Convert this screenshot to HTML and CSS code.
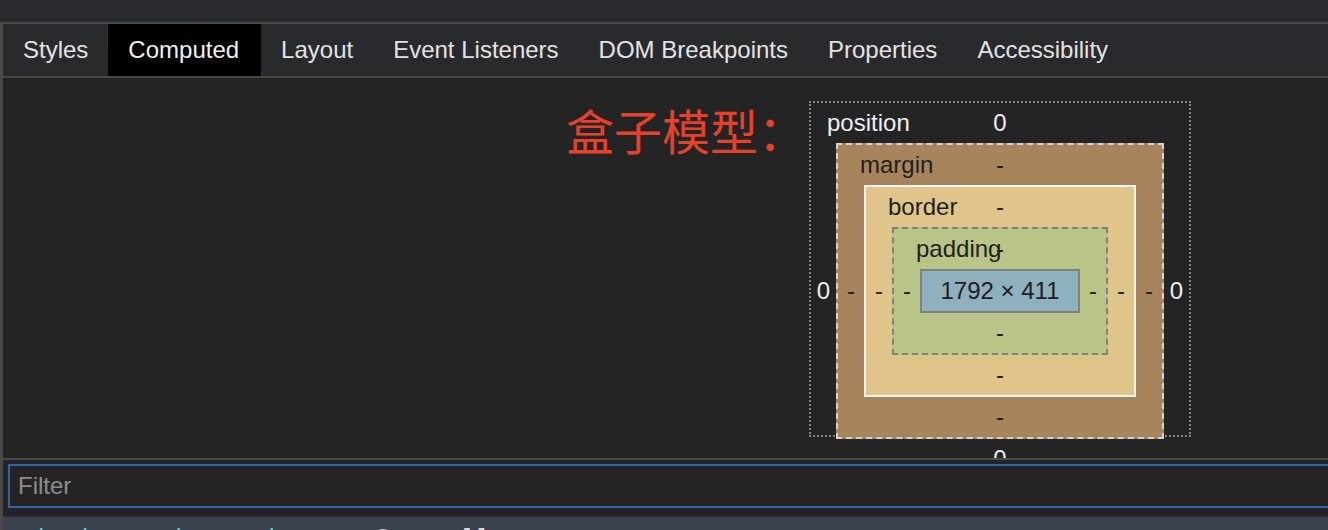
FILE: index.html
```html
<!DOCTYPE html>
<html lang="zh-CN">
<head>
<meta charset="utf-8">
<title>Computed</title>
<link rel="stylesheet" href="styles.css">
</head>
<body>
<div class="topstrip"></div>
<div class="shell">
  <div class="panel">
    <nav class="tabs">
      <div class="tab">Styles</div>
      <div class="tab active">Computed</div>
      <div class="tab">Layout</div>
      <div class="tab">Event Listeners</div>
      <div class="tab">DOM Breakpoints</div>
      <div class="tab">Properties</div>
      <div class="tab">Accessibility</div>
    </nav>
    <section class="content">
      <div class="note">盒子模型：</div>
      <div class="bm position">
        <div class="edge"><span class="lbl">position</span><span class="val">0</span><span></span></div>
        <div class="mid">
          <span class="side">0</span>
          <div class="bm margin">
            <div class="edge"><span class="lbl">margin</span><span class="val">-</span><span></span></div>
            <div class="mid">
              <span class="side">-</span>
              <div class="bm border">
                <div class="edge"><span class="lbl">border</span><span class="val">-</span><span></span></div>
                <div class="mid">
                  <span class="side">-</span>
                  <div class="bm padding">
                    <div class="edge"><span class="lbl">padding</span><span class="val">-</span><span></span></div>
                    <div class="mid">
                      <span class="side">-</span>
                      <div class="bm contentbox">1792 × 411</div>
                      <span class="side">-</span>
                    </div>
                    <div class="edge bottom"><span></span><span class="val">-</span><span></span></div>
                  </div>
                  <span class="side">-</span>
                </div>
                <div class="edge bottom"><span></span><span class="val">-</span><span></span></div>
              </div>
              <span class="side">-</span>
            </div>
            <div class="edge bottom"><span></span><span class="val">-</span><span></span></div>
          </div>
          <span class="side">0</span>
        </div>
        <div class="edge bottom"><span></span><span class="val">0</span><span></span></div>
      </div>
    </section>
    <div class="filterbar">
      <div class="filter">Filter</div>
    </div>
    <div class="proprow">
      <span class="tri">▶</span>
      <span class="pname">background-attachment</span><span class="colon">:</span>
      <span class="info"></span>
      <span class="pval">scroll</span>
    </div>
  </div>
</div>
</body>
</html>
```
FILE: styles.css
```css
html, body {
  margin: 0;
  padding: 0;
  background: #242424;
  overflow: hidden;
  height: 530px;
}
body {
  font-family: "Liberation Sans", Arial, sans-serif;
  color: #e8e8e8;
}
.topstrip {
  height: 22px;
  background: #292a2d;
  border-bottom: 2px solid #474747;
}
.shell {
  border-left: 3px solid #4a4a4a;
}
.panel {
  display: flex;
  flex-direction: column;
}
.tabs {
  display: flex;
  height: 52px;
  background: #292a2d;
  border-bottom: 2px solid #474747;
}
.tab {
  padding: 0 20px;
  font-size: 24px;
  line-height: 52px;
  color: #e3e3e3;
  white-space: nowrap;
}
.tab.active {
  background: #000;
  color: #f0f0f0;
  padding-right: 22px;
}
.content {
  border-bottom: 2px solid #4b4b4b;
  overflow: hidden;
  display: flex;
  align-items: flex-start;
  padding: 23px 0 0 563px;
  box-sizing: border-box;
  height: 382px;
}
.note {
  width: 243px;
  flex: none;
  font-family: "Noto Sans CJK SC", sans-serif;
  font-size: 48px;
  line-height: 48px;
  margin-top: 4px;
  color: #e8412a;
  white-space: nowrap;
}
.bm {
  box-sizing: border-box;
  display: flex;
  flex-direction: column;
  font-size: 24px;
  flex: none;
}
.edge {
  display: grid;
  grid-template-columns: minmax(0, 1fr) auto minmax(0, 1fr);
  align-items: center;
  height: 40px;
  line-height: 40px;
}
.lbl {
  padding-left: 22px;
  white-space: nowrap;
  overflow: visible;
}
.val {
  text-align: center;
}
.mid {
  display: flex;
  align-items: center;
}
.side {
  width: 26px;
  text-align: center;
  flex: none;
}
.position {
  width: 382px;
  height: 336px;
  border: 2px dotted #858585;
  color: #efefef;
}
.position > .edge .lbl {
  padding-left: 16px;
}
.position > .mid > .side {
  width: 25px;
}
.margin {
  width: 328px;
  background: #a7845b;
  border: 2px dashed #d3d3d3;
  color: #1e1e1e;
}
.border {
  width: 272px;
  background: #dfc58a;
  border: 2px solid #f2f2f2;
}
.padding {
  width: 216px;
  background: #b9c487;
  border: 2px dashed #808080;
}
.contentbox {
  width: 160px;
  height: 44px;
  background: #8fb0bd;
  border: 2px solid #808080;
  align-items: center;
  justify-content: center;
  line-height: 40px;
  color: #1e1e1e;
}
.filterbar {
  padding: 4px 0 7px 5px;
  border-bottom: 2px solid #2c2c2c;
}
.filter {
  height: 44px;
  box-sizing: border-box;
  border: 2px solid #2f65a6;
  border-right: none;
  padding-left: 8px;
  font-size: 24px;
  line-height: 40px;
  color: #8e8e8e;
}
.proprow {
  display: flex;
  align-items: baseline;
  background: #39424e;
  height: 40px;
  padding: 7px 0 0 12px;
  font-family: "Liberation Mono", "Courier New", monospace;
  font-size: 24px;
  line-height: 32px;
  white-space: pre;
}
.tri {
  font-family: "DejaVu Sans", sans-serif;
  font-size: 14px;
  color: #9a9a9a;
  width: 23px;
}
.pname {
  color: #5dd5c4;
}
.colon {
  color: #d6d6d6;
  width: 33px;
}
.info {
  width: 20px;
  height: 20px;
  border-radius: 50%;
  background: #c9c9c9;
  margin-right: 10px;
  align-self: flex-start;
  margin-top: 5px;
}
.pval {
  color: #e0e0e0;
}
```
